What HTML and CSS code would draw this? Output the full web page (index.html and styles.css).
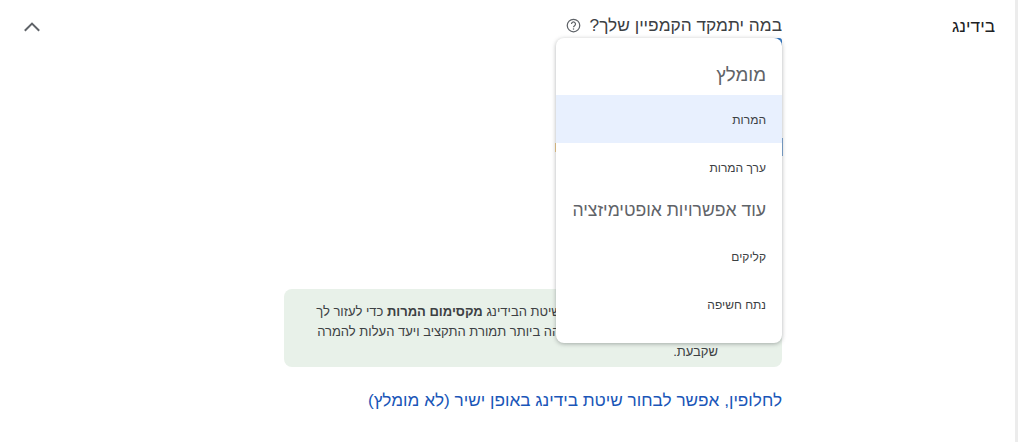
FILE: index.html
```html
<!DOCTYPE html>
<html lang="he" dir="rtl">
<head>
    <meta charset="UTF-8">
    <title>בידינג</title>
    <link rel="stylesheet" href="styles.css">
</head>
<body>
    <div class="panel">
        <h2 class="panel-title">בידינג</h2>
        <div class="panel-body">
            <div class="question">
                <span>במה יתמקד הקמפיין שלך?</span>
                <svg class="help-icon" viewBox="0 0 24 24" width="15" height="15" fill="none">
                    <circle cx="12" cy="12" r="10" stroke="#5f6368" stroke-width="2"/>
                    <path d="M8.8 9.6a3.2 3.2 0 1 1 5 2.6c-1.1.8-1.8 1.3-1.8 2.6" stroke="#5f6368" stroke-width="2"/>
                    <circle cx="12" cy="17.6" r="1.2" fill="#5f6368"/>
                </svg>
            </div>
            <div class="field-area">
                <span class="mark-top"></span>
                <span class="mark-blue"></span>
                <span class="mark-orange"></span>
                <div class="menu">
                    <div class="menu-group first">מומלץ</div>
                    <div class="menu-item selected">המרות</div>
                    <div class="menu-item">ערך המרות</div>
                    <div class="menu-group">עוד אפשרויות אופטימיזציה</div>
                    <div class="menu-item">קליקים</div>
                    <div class="menu-item">נתח חשיפה</div>
                </div>
            </div>
            <div class="notice">
                <p>הגדרנו לך כברירת מחדל את שיטת הבידינג <b>מקסימום המרות</b> כדי לעזור לך<br>להשיג מהר את התוצאה הגבוהה ביותר תמורת התקציב ויעד העלות להמרה<br>שקבעת.</p>
            </div>
            <a class="alt-link" href="#">לחלופין, אפשר לבחור שיטת בידינג באופן ישיר (לא מומלץ)</a>
        </div>
        <div class="panel-toggle">
            <svg viewBox="0 0 24 24" width="24" height="24" fill="none">
                <path d="M4.8 15.8 12 8.6l7.2 7.2" stroke="#5f6368" stroke-width="2"/>
            </svg>
        </div>
    </div>
</body>
</html>
```

FILE: styles.css
```css
body {
    margin: 0;
    font-family: "Liberation Sans", Arial, sans-serif;
    color: #3c4043;
    background: #fff;
    overflow: hidden;
}

.panel {
    display: flex;
    height: 442px;
    box-sizing: border-box;
    margin-right: 3px;
    border-right: 3px solid #ececec;
    padding-right: 20px;
}

.panel-title {
    width: 213px;
    flex: none;
    margin: 0;
    padding-top: 16px;
    font-size: 17.3px;
    line-height: 20px;
    font-weight: normal;
    color: #202124;
}

.panel-body {
    width: 498px;
    flex: none;
}

.question {
    display: flex;
    align-items: center;
    gap: 9px;
    height: 20px;
    margin-top: 15px;
    font-size: 17.3px;
    color: #3c4043;
}

.field-area {
    position: relative;
    height: 254px;
}

.menu {
    position: absolute;
    top: 3px;
    right: 0;
    width: 226px;
    height: 305px;
    background: #fff;
    border-radius: 8px;
    box-shadow: 0 1px 4px rgba(60, 64, 67, 0.4);
    overflow: hidden;
}

.menu-group {
    height: 41px;
    padding-right: 16px;
    line-height: 38px;
    font-size: 17.6px;
    white-space: nowrap;
    color: #5f6368;
}

.first {
    height: 57px;
    line-height: 74px;
    font-size: 18.7px;
}

.menu-item {
    height: 48px;
    padding-right: 16px;
    line-height: 50px;
    font-size: 12px;
    color: #3c4043;
}

.selected {
    background: #e8f0fe;
}

.mark-top {
    position: absolute;
    top: 3px;
    right: 0;
    width: 14px;
    height: 14px;
    border-radius: 3px;
    background: #2f76c4;
}

.mark-blue {
    position: absolute;
    top: 103px;
    right: -1px;
    width: 2px;
    height: 18px;
    background: #7fa8d4;
}

.mark-orange {
    position: absolute;
    top: 108px;
    right: 226px;
    width: 1px;
    height: 9px;
    background: #eec98a;
}

.notice {
    height: 78px;
    box-sizing: border-box;
    padding: 13px 64px 0 0;
    background: #e8f1e9;
    border-radius: 8px;
}

.notice p {
    margin: 0;
    font-size: 13px;
    line-height: 20px;
}

.alt-link {
    display: block;
    margin-top: 23px;
    font-size: 17.2px;
    line-height: 20px;
    color: #1a56b8;
    text-decoration: none;
}

.panel-toggle {
    flex: none;
    margin-right: 240px;
    padding-top: 15px;
    height: 24px;
}
```
